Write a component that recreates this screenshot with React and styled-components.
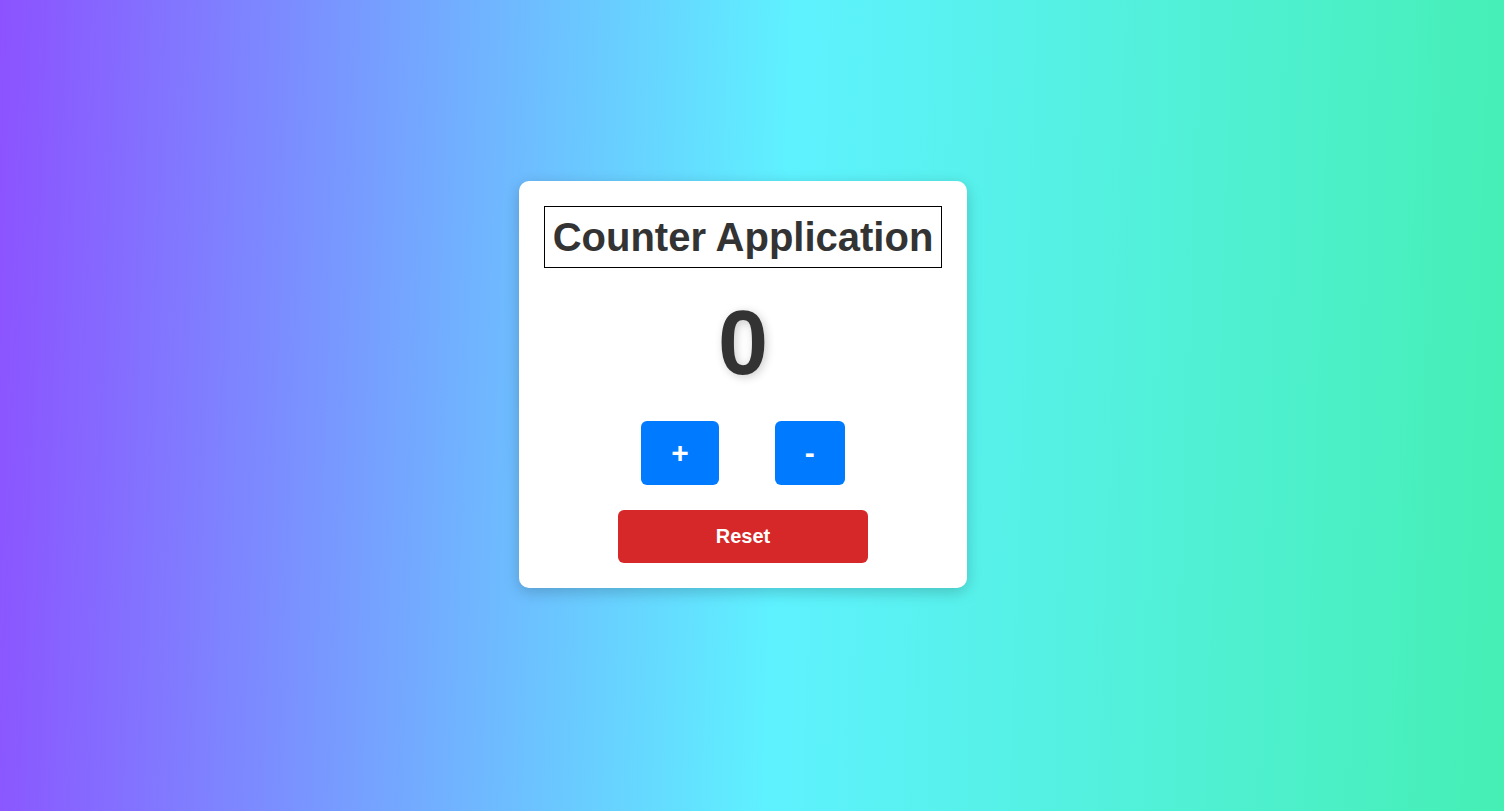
import { useState } from "react";
import styled, { createGlobalStyle } from "styled-components";

const GlobalStyle = createGlobalStyle`
  * {
    box-sizing: border-box;
  }
  body {
    margin: 0;
    font-family: "Liberation Sans", Arial, sans-serif;
  }
`;

const Page = styled.div`
  min-height: 100vh;
  display: flex;
  justify-content: center;
  align-items: flex-start;
  padding: 181px 18px 0 0;
  background: linear-gradient(92deg, #8c52ff 0%, #5ef2ff 52%, #45efb4 100%);
`;

const Card = styled.div`
  width: 448px;
  background-color: white;
  border-radius: 10px;
  padding: 25px;
  box-shadow: 0 4px 15px rgba(0, 0, 0, 0.2);
  display: flex;
  flex-direction: column;
  align-items: center;
`;

const Title = styled.h1`
  margin: 0;
  width: 100%;
  border: 1px solid black;
  padding: 7px 0;
  font-size: 40px;
  font-weight: 700;
  line-height: 46px;
  color: #333;
  text-align: center;
`;

const Count = styled.div`
  margin-top: 25px;
  font-size: 90px;
  font-weight: 700;
  line-height: 101px;
  color: #333;
  text-shadow: 2px 2px 10px rgba(0, 0, 0, 0.2);
`;

const Controls = styled.div`
  margin-top: 27px;
  display: flex;
  gap: 56px;
`;

const Button = styled.button`
  border: none;
  border-radius: 6px;
  padding: 15px 30px;
  font-family: inherit;
  font-size: 30px;
  font-weight: 700;
  line-height: 34px;
  color: white;
  background-color: #007bff;
  cursor: pointer;
`;

const ResetButton = styled(Button)`
  margin-top: 25px;
  width: 250px;
  font-size: 20px;
  line-height: 23px;
  background-color: #d62828;
`;

export default function App() {
  const [count, setCount] = useState(0);
  return (
    <>
      <GlobalStyle />
      <Page>
        <Card>
          <Title>Counter Application</Title>
          <Count>{count}</Count>
          <Controls>
            <Button onClick={() => setCount(count + 1)}>+</Button>
            <Button onClick={() => setCount(count - 1)}>-</Button>
          </Controls>
          <ResetButton onClick={() => setCount(0)}>Reset</ResetButton>
        </Card>
      </Page>
    </>
  );
}
